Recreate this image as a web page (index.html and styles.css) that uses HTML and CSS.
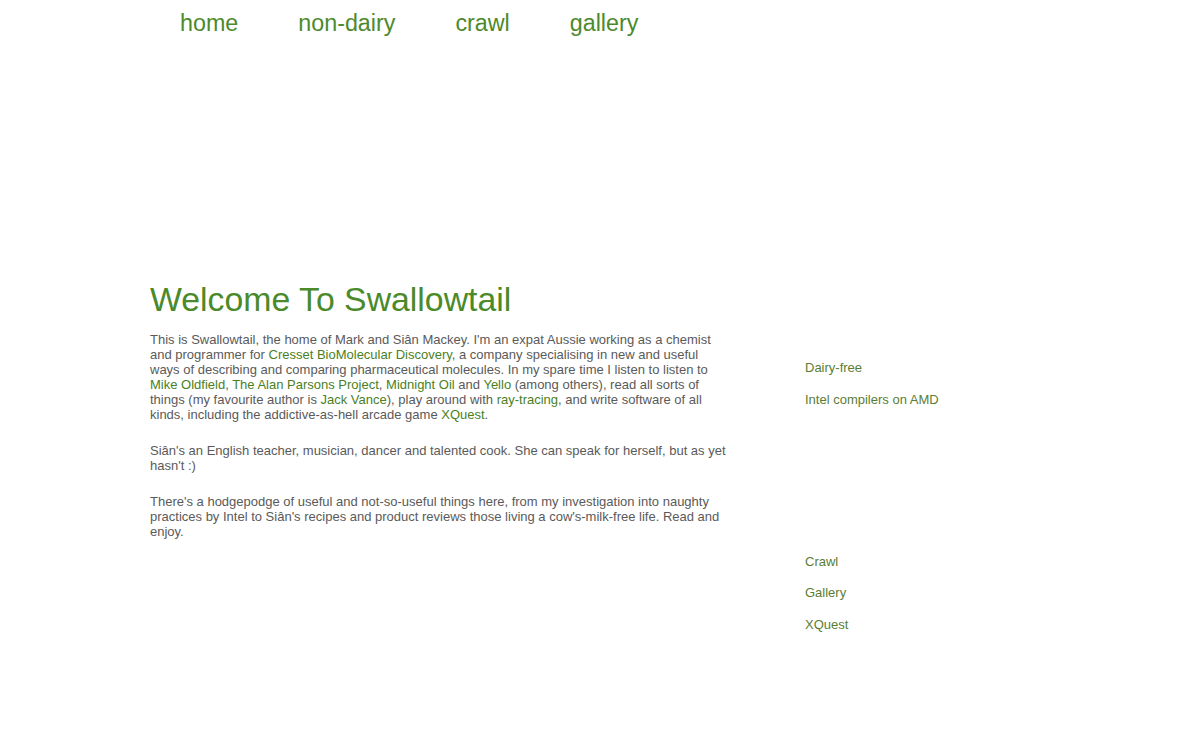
FILE: index.html
```html
<!DOCTYPE html>
<html lang="en">
<head>
<meta charset="utf-8">
<title>Swallowtail</title>
<link rel="stylesheet" href="styles.css">
</head>
<body>
<div class="page">
  <nav class="topnav">
    <a href="#">home</a>
    <a href="#">non-dairy</a>
    <a href="#">crawl</a>
    <a href="#">gallery</a>
  </nav>
  <div class="content">
    <main class="main">
      <h1 class="title">Welcome To Swallowtail</h1>
      <p>This is Swallowtail, the home of Mark and Siân Mackey. I'm an expat Aussie working as a chemist and programmer for <a href="#">Cresset BioMolecular Discovery</a>, a company specialising in new and useful ways of describing and comparing pharmaceutical molecules. In my spare time I listen to listen to <a href="#">Mike Oldfield</a>, <a href="#">The Alan Parsons Project</a>, <a href="#">Midnight Oil</a> and <a href="#">Yello</a> (among others), read all sorts of things (my favourite author is <a href="#">Jack Vance</a>), play around with <a href="#">ray-tracing</a>, and write software of all kinds, including the addictive-as-hell arcade game <a href="#">XQuest</a>.</p>
      <p>Siân's an English teacher, musician, dancer and talented cook. She can speak for herself, but as yet hasn't :)</p>
      <p>There's a hodgepodge of useful and not-so-useful things here, from my investigation into naughty practices by Intel to Siân's recipes and product reviews those living a cow's-milk-free life. Read and enjoy.</p>
    </main>
    <aside class="side">
      <ul class="sidelist">
        <li><a href="#">Dairy-free</a></li>
        <li><a href="#">Intel compilers on AMD</a></li>
      </ul>
      <ul class="sidelist second">
        <li><a href="#">Crawl</a></li>
        <li><a href="#">Gallery</a></li>
        <li><a href="#">XQuest</a></li>
      </ul>
    </aside>
  </div>
</div>
</body>
</html>
```

FILE: styles.css
```css
html, body {
  margin: 0;
  padding: 0;
  background: #ffffff;
}
body {
  font-family: "Liberation Sans", Arial, sans-serif;
  color: #5a5a5a;
}
.page {
  padding-left: 150px;
}
.topnav {
  display: flex;
  padding-top: 9px;
  height: 30px;
}
.topnav a {
  font-size: 23.3px;
  line-height: 28px;
  color: #4d8a2e;
  text-decoration: none;
  padding: 0 30px;
}
.content {
  display: flex;
  gap: 75px;
  padding-top: 242px;
}
.main {
  width: 580px;
  flex: none;
}
.title {
  margin: -1px 0 14px 0;
  font-size: 33.8px;
  line-height: 38px;
  font-weight: normal;
  color: #4a8a2a;
}
.main p {
  margin: 0 0 21px 0;
  font-size: 13px;
  line-height: 15px;
}
.main a {
  color: #4a7f24;
  text-decoration: none;
}
.side {
  padding-top: 79px;
}
.sidelist {
  list-style: none;
  margin: 0;
  padding: 0;
}
.sidelist li {
  font-size: 13px;
  line-height: 16px;
  height: 31.6px;
}
.sidelist.second {
  margin-top: 130.5px;
}
.sidelist a {
  color: #5a7d36;
  text-decoration: none;
}
```
